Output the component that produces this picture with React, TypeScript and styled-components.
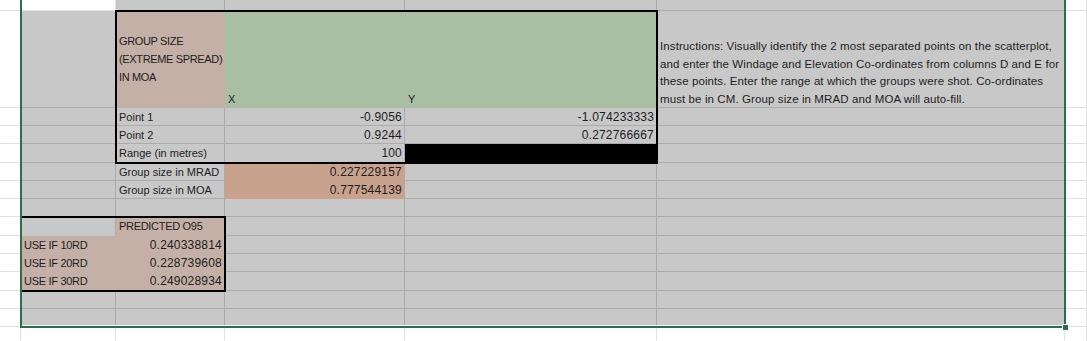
import React from 'react'
import styled, { createGlobalStyle } from 'styled-components'

type Fill = 'none' | 'gray' | 'pink' | 'green' | 'salmon' | 'black'

const fills: Record<Fill, string> = {
  none: '#ffffff',
  gray: '#c8c8c8',
  pink: '#c5b0a7',
  green: '#a9bea3',
  salmon: '#c9a28e',
  black: '#000000'
}

// gridline colour per fill, coloured fills hide their gridlines like excel does
const lines: Record<Fill, string> = {
  none: '#e1e1e1',
  gray: '#acacac',
  pink: '#c5b0a7',
  green: '#a9bea3',
  salmon: '#c9a28e',
  black: '#000000'
}

const GlobalStyle = createGlobalStyle`
  html, body {
    margin: 0;
    padding: 0;
    background: #ffffff;
  }
  body {
    font-family: 'Liberation Sans', Arial, sans-serif;
    color: #1d1d1d;
    overflow: hidden;
  }
`

const Sheet = styled.div`
  display: grid;
  grid-template-columns: 21px 95px 109px 180px 252px 408px 22px;
  grid-template-rows: 11px 97px 18px 18px 19px 18px 18px 18px 19px 18px 18px 19px 18px 18px 14px;
  width: 1087px;
  height: 341px;
  overflow: hidden;
`

interface CellProps {
  $row: number
  $col: number
  $fill: Fill
  $num?: boolean
  $caps?: boolean
  $valign?: 'center' | 'end'
  $hideRight?: boolean
  $hideBottom?: boolean
}

const Cell = styled.div<CellProps>`
  grid-row: ${p => p.$row};
  grid-column: ${p => p.$col};
  display: flex;
  min-width: 0;
  align-items: ${p => (p.$valign === 'end' ? 'flex-end' : 'center')};
  justify-content: ${p => (p.$num ? 'flex-end' : 'flex-start')};
  padding: 0 ${p => (p.$num ? '2px' : '0')} 0 ${p => (p.$num ? '0' : '3px')};
  background: ${p => fills[p.$fill]};
  border-right: 1px solid ${p => (p.$hideRight ? 'transparent' : lines[p.$fill])};
  border-bottom: 1px solid ${p => (p.$hideBottom ? 'transparent' : lines[p.$fill])};
  font-size: ${p => (p.$num ? '12px' : '11px')};
  letter-spacing: ${p => (p.$num ? '0.2px' : p.$caps ? '-0.3px' : 'normal')};
  white-space: nowrap;
  overflow: visible;
`

const HeaderStack = styled.div`
  display: flex;
  flex-direction: column;
  line-height: 18px;
  letter-spacing: -0.35px;
`

const AxisLabel = styled.span`
  line-height: 13px;
  padding-bottom: 1px;
`

const Instructions = styled.div`
  display: flex;
  flex-direction: column;
  font-size: 11.5px;
  letter-spacing: 0.1px;
  line-height: 17.5px;
  margin-bottom: -1px;
`

const RangeBox = styled.div<{ $cols: string, $rows: string }>`
  grid-column: ${p => p.$cols};
  grid-row: ${p => p.$rows};
  margin: -1px;
  border: 2px solid #000000;
  pointer-events: none;
`

const Selection = styled.div`
  position: relative;
  grid-column: 2 / 7;
  grid-row: 1 / 15;
  margin: 0 -1px -1px -1px;
  border: 2px solid #2e6c4b;
  border-top: none;
  box-shadow: inset 0 -1px 0 #eef5f0;
  pointer-events: none;
`

const Handle = styled.div`
  position: absolute;
  right: -5px;
  bottom: -5px;
  width: 5px;
  height: 5px;
  background: #2e6c4b;
  border: 1px solid #ffffff;
`

interface Spec {
  fill: Fill
  content?: React.ReactNode
  num?: boolean
  caps?: boolean
  valign?: 'center' | 'end'
  hideRight?: boolean
  hideBottom?: boolean
}

const w: Spec = { fill: 'none' }
const g = (content?: string, num?: boolean): Spec => ({ fill: 'gray', content, num })
const p = (content?: string, num?: boolean): Spec => ({ fill: 'pink', content, num, caps: !num })
const s = (content: string): Spec => ({ fill: 'salmon', content, num: true })

const instructionLines = [
  'Instructions: Visually identify the 2 most separated points on the scatterplot,',
  'and enter the Windage and Elevation Co-ordinates from columns D and E for',
  'these points. Enter the range at which the groups were shot. Co-ordinates',
  'must be in CM. Group size in MRAD and MOA will auto-fill.'
]

const headerRow: Spec[] = [
  w,
  g(),
  {
    fill: 'pink',
    content: (
      <HeaderStack>
        <span>GROUP SIZE</span>
        <span>(EXTREME SPREAD)</span>
        <span>IN MOA</span>
      </HeaderStack>
    )
  },
  { fill: 'green', valign: 'end', hideRight: true, content: <AxisLabel>X</AxisLabel> },
  { fill: 'green', valign: 'end', content: <AxisLabel>Y</AxisLabel> },
  {
    fill: 'gray',
    valign: 'end',
    content: (
      <Instructions>
        {instructionLines.map(line => <span key={line}>{line}</span>)}
      </Instructions>
    )
  },
  w
]

const body = (a: Spec, b: Spec, c: Spec, d: Spec): Spec[] => [w, a, b, c, d, g(), w]

const rows: Spec[][] = [
  [w, w, g(), g(), g(), g(), w],
  headerRow,
  body(g(), g('Point 1'), g('-0.9056', true), g('-1.074233333', true)),
  body(g(), g('Point 2'), g('0.9244', true), g('0.272766667', true)),
  body(g(), g('Range (in metres)'), g('100', true), { fill: 'black' }),
  body(g(), g('Group size in MRAD'), s('0.227229157'), g()),
  body(g(), g('Group size in MOA'), s('0.777544139'), g()),
  body(g(), g(), g(), g()),
  body({ fill: 'gray', hideBottom: true }, p('PREDICTED O95'), g(), g()),
  body(p('USE IF 10RD'), p('0.240338814', true), g(), g()),
  body(p('USE IF 20RD'), p('0.228739608', true), g(), g()),
  body(p('USE IF 30RD'), p('0.249028934', true), g(), g()),
  body(g(), g(), g(), g()),
  body(g(), g(), g(), g()),
  [w, w, w, w, w, w, w].map(() => ({ fill: 'none' as Fill, hideBottom: true }))
]

const App: React.FC = (): JSX.Element => {
  return (
    <>
      <GlobalStyle />
      <Sheet>
        {rows.map((row, r) => row.map((spec, c) => (
          <Cell
            key={r + '-' + c}
            $row={r + 1}
            $col={c + 1}
            $fill={spec.fill}
            $num={spec.num}
            $caps={spec.caps}
            $valign={spec.valign}
            $hideRight={spec.hideRight}
            $hideBottom={spec.hideBottom}
          >
            {spec.content}
          </Cell>
        )))}
        <RangeBox $cols='3 / 6' $rows='2 / 6' />
        <RangeBox $cols='2 / 4' $rows='9 / 13' />
        <Selection>
          <Handle />
        </Selection>
      </Sheet>
    </>
  )
}

export default App
